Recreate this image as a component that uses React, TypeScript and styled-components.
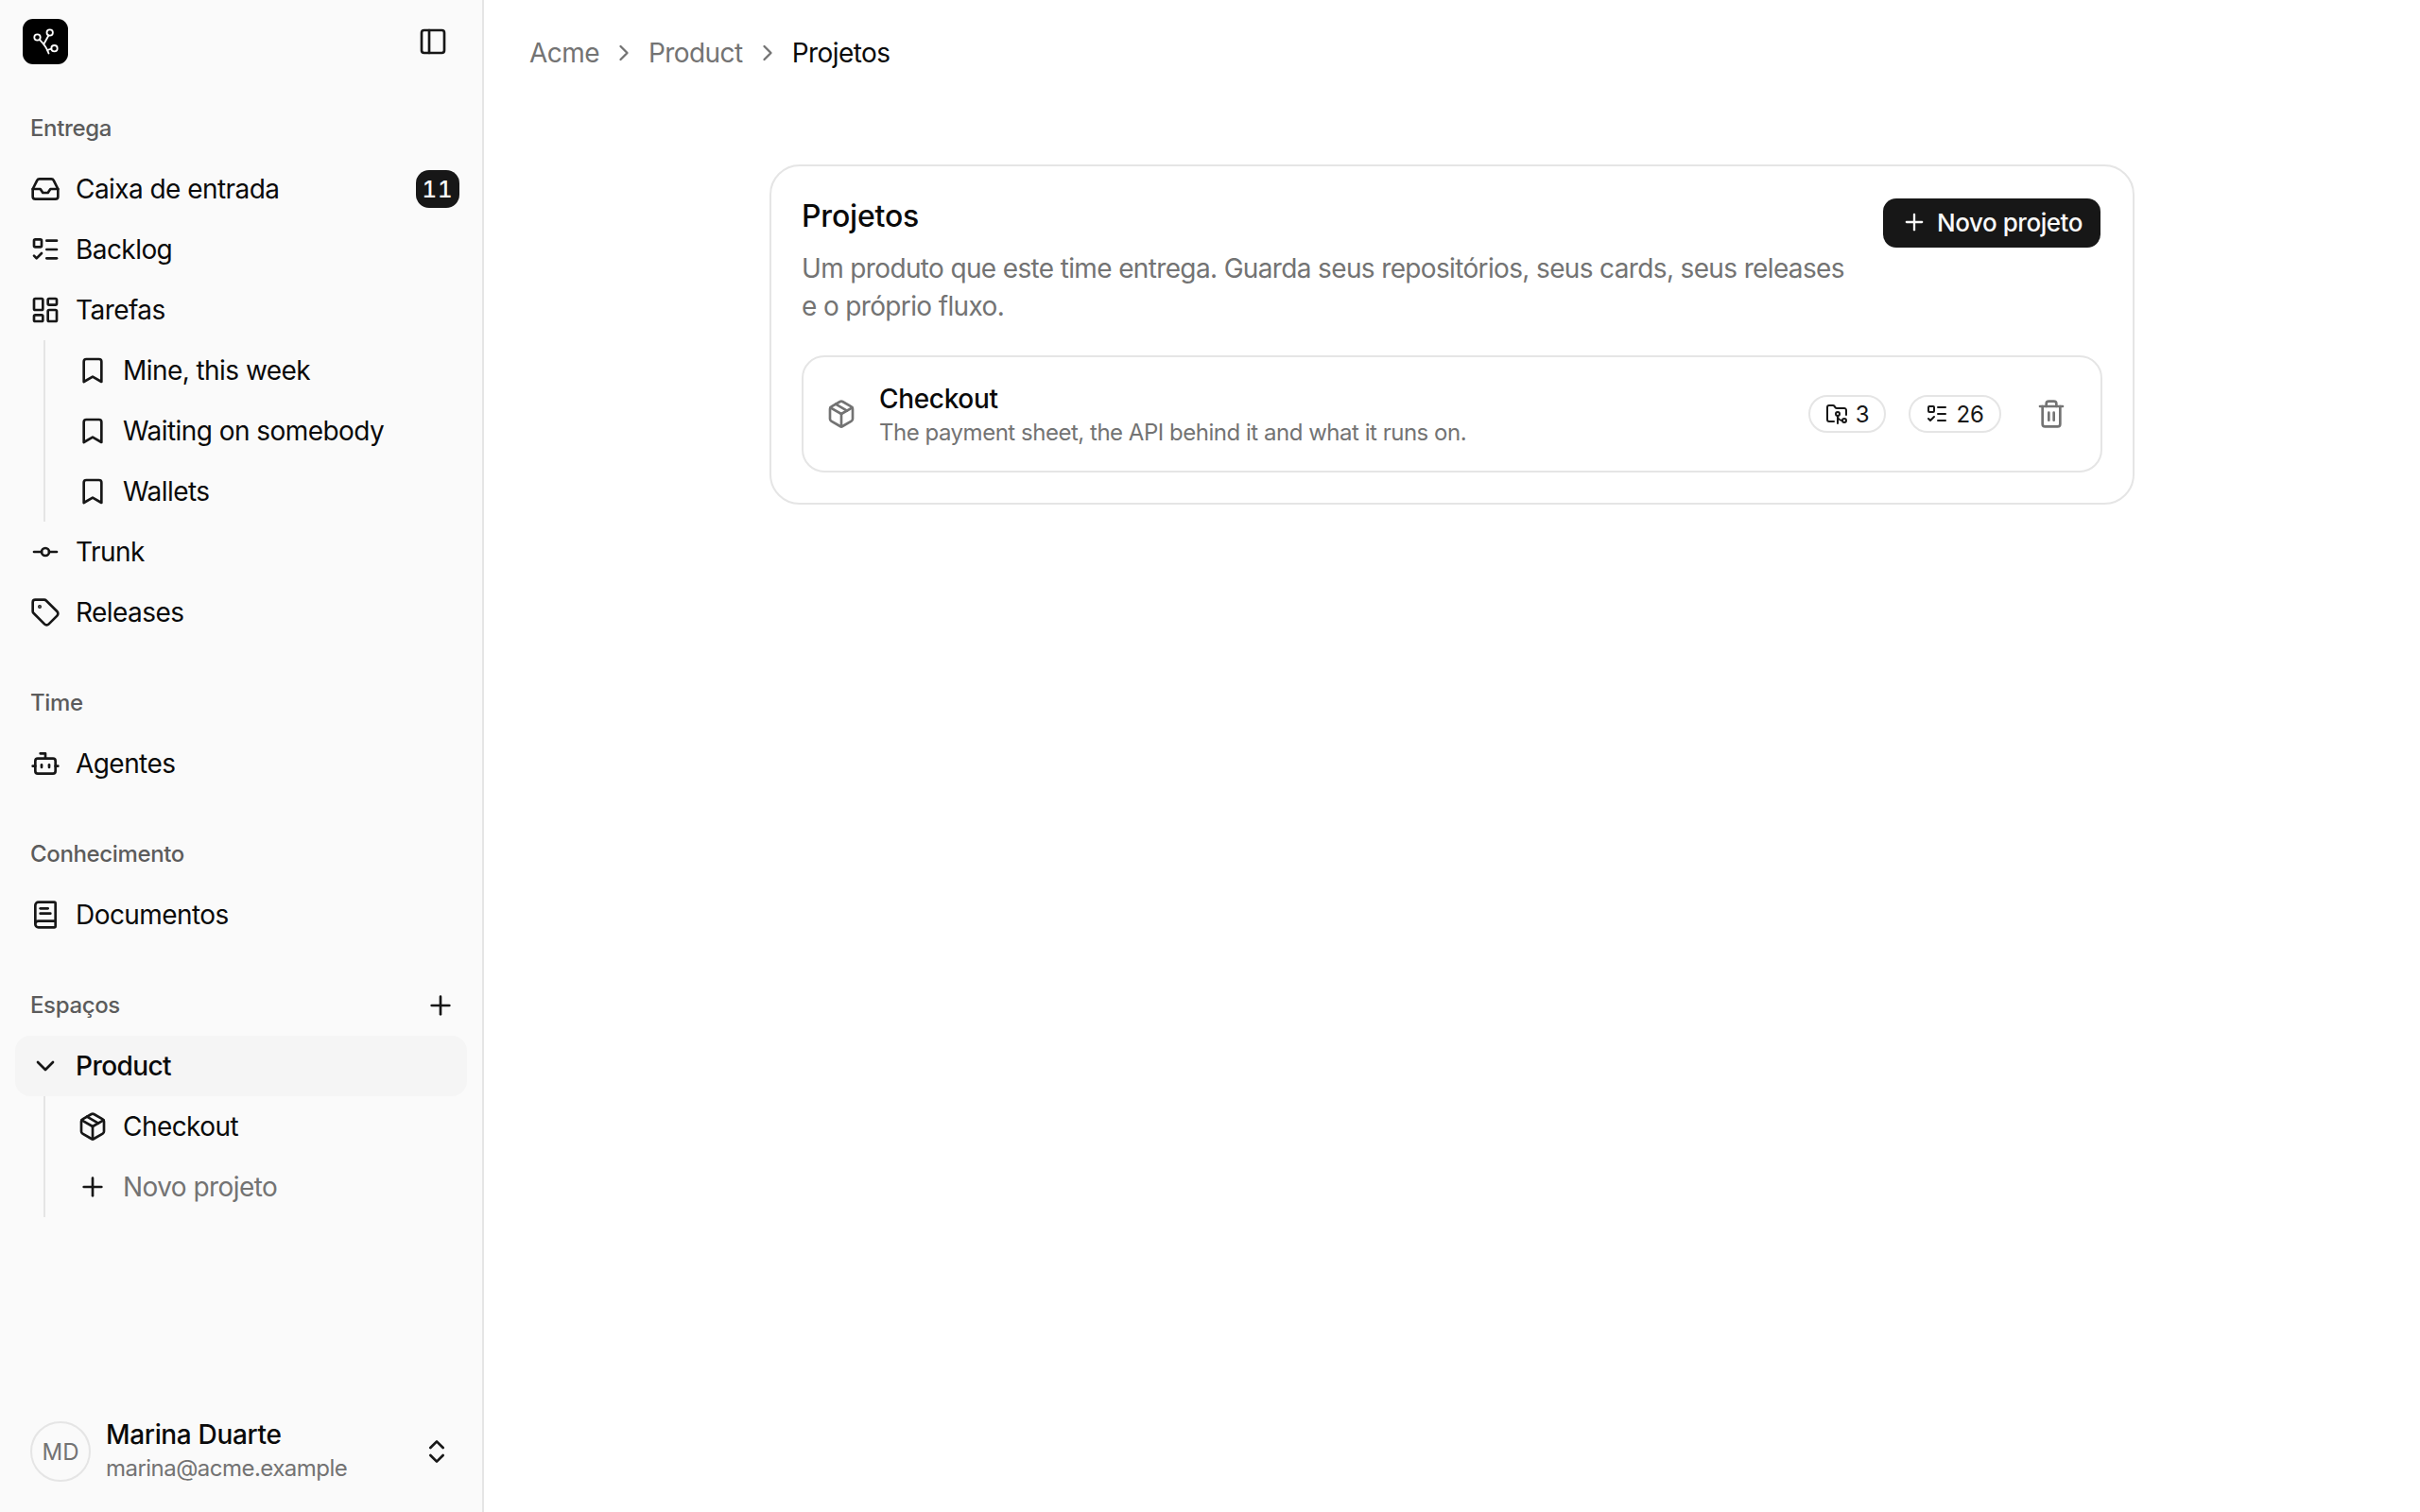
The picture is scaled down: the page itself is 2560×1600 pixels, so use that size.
import React from "react";
import styled, { createGlobalStyle } from "styled-components";
import {
  Inbox,
  ListTodo,
  LayoutDashboard,
  Bookmark,
  GitCommitHorizontal,
  Tag,
  Bot,
  BookText,
  Plus,
  ChevronDown,
  ChevronRight,
  ChevronsUpDown,
  Package,
  PanelLeft,
  FolderGit2,
  Trash2,
} from "lucide-react";

const GlobalStyle = createGlobalStyle`
  html, body, #root {
    margin: 0;
    height: 100%;
  }
  body {
    font-family: Inter, "Liberation Sans", sans-serif;
    color: #0a0a0a;
    background: #ffffff;
  }
  * {
    box-sizing: border-box;
  }
`;

const Shell = styled.div`
  display: flex;
  height: 100vh;
  overflow: hidden;
`;

const Sidebar = styled.aside`
  width: 512px;
  flex: none;
  display: flex;
  flex-direction: column;
  background: #fafafa;
  border-right: 2px solid #e5e5e5;
`;

const SidebarHeader = styled.div`
  height: 104px;
  flex: none;
  display: flex;
  justify-content: space-between;
  align-items: flex-start;
  padding: 20px 36px 0 24px;
`;

const LogoMark = styled.div`
  width: 48px;
  height: 48px;
  border-radius: 11px;
  background: #000000;
  display: flex;
`;

const ToggleButton = styled.div`
  margin-top: 8px;
  display: flex;
  color: #171717;
`;

const Group = styled.section`
  padding: 0 16px;
  margin-bottom: 32px;
`;

const GroupLabel = styled.div`
  height: 64px;
  display: flex;
  align-items: center;
  justify-content: space-between;
  padding: 0 12px 1px 16px;
  font-size: 24px;
  font-weight: 500;
  letter-spacing: -0.015em;
  color: #5c5c5c;
`;

const AddIcon = styled.span`
  display: flex;
  color: #171717;
`;

const Row = styled.div<{ $active?: boolean }>`
  height: 64px;
  display: flex;
  align-items: center;
  gap: 16px;
  padding: 0 8px 0 16px;
  border-radius: 16px;
  font-size: 28px;
  letter-spacing: -0.02em;
  background: ${(p) => (p.$active ? "#f5f5f5" : "transparent")};
  font-weight: ${(p) => (p.$active ? 500 : 400)};
`;

const RowIcon = styled.span`
  width: 32px;
  height: 32px;
  flex: none;
  display: flex;
  align-items: center;
  justify-content: center;
  color: #171717;
`;

const RowLabel = styled.span<{ $muted?: boolean }>`
  flex: 1;
  white-space: nowrap;
  color: ${(p) => (p.$muted ? "#737373" : "#0a0a0a")};
`;

const Badge = styled.span`
  width: 46px;
  height: 40px;
  border-radius: 14px;
  display: flex;
  align-items: center;
  justify-content: center;
  background: #171717;
  color: #fafafa;
  font-size: 24px;
  font-weight: 500;
  letter-spacing: 1px;
  font-feature-settings: "tnum";
`;

const SubList = styled.div`
  margin-left: 30px;
  padding-left: 18px;
  border-left: 2px solid #e5e5e5;
`;

const Footer = styled.div`
  margin-top: auto;
  height: 96px;
  margin-bottom: 16px;
  display: flex;
  align-items: center;
  gap: 16px;
  padding: 0 32px;
`;

const Avatar = styled.div`
  width: 64px;
  height: 64px;
  flex: none;
  border-radius: 50%;
  border: 2px solid #e5e5e5;
  display: flex;
  align-items: center;
  justify-content: center;
  font-size: 24px;
  color: #737373;
`;

const UserInfo = styled.div`
  flex: 1;
  display: flex;
  flex-direction: column;
`;

const UserName = styled.div`
  font-size: 28px;
  line-height: 36px;
  font-weight: 500;
  letter-spacing: -0.012em;
  color: #0a0a0a;
`;

const UserMail = styled.div`
  font-size: 24px;
  line-height: 36px;
  letter-spacing: -0.022em;
  color: #737373;
`;

const Main = styled.main`
  flex: 1;
  display: flex;
  flex-direction: column;
`;

const Breadcrumb = styled.nav`
  height: 112px;
  flex: none;
  display: flex;
  align-items: center;
  gap: 12px;
  padding-left: 48px;
  font-size: 28px;
  letter-spacing: -0.02em;
  color: #737373;
`;

const Crumb = styled.span<{ $current?: boolean }>`
  color: ${(p) => (p.$current ? "#0a0a0a" : "#737373")};
`;

const Content = styled.div`
  flex: 1;
  padding-top: 62px;
`;

const Card = styled.section`
  width: 1444px;
  margin: 0 auto;
  padding: 32px;
  background: #ffffff;
  border: 2px solid #e5e5e5;
  border-radius: 32px;
`;

const CardHeader = styled.div`
  display: flex;
  justify-content: space-between;
  align-items: flex-start;
  gap: 24px;
  margin-bottom: 32px;
`;

const CardHeading = styled.div`
  flex: 1;
  display: flex;
  flex-direction: column;
  gap: 14px;
`;

const CardTitle = styled.h2`
  margin: 0;
  font-size: 32px;
  line-height: 42px;
  font-weight: 500;
  letter-spacing: -0.006em;
  color: #0a0a0a;
`;

const CardText = styled.p`
  margin: 0;
  font-size: 28px;
  line-height: 40px;
  letter-spacing: -0.023em;
  color: #737373;
`;

const PrimaryButton = styled.button`
  height: 52px;
  width: 230px;
  flex: none;
  margin: 2px 2px 0 0;
  padding: 0 0 2px;
  border: 0;
  border-radius: 14px;
  background: #171717;
  color: #fafafa;
  display: flex;
  align-items: center;
  justify-content: center;
  gap: 10px;
  font-family: inherit;
  font-size: 26px;
  font-weight: 500;
  letter-spacing: -0.018em;
`;

const ProjectRow = styled.div`
  height: 124px;
  display: flex;
  align-items: center;
  padding: 0 23px 0 24px;
  border: 2px solid #e5e5e5;
  border-radius: 24px;
`;

const ProjectIcon = styled.span`
  display: flex;
  flex: none;
  margin-right: 24px;
  color: #737373;
`;

const ProjectInfo = styled.div`
  flex: 1;
  display: flex;
  flex-direction: column;
`;

const ProjectName = styled.div`
  font-size: 28px;
  line-height: 40px;
  font-weight: 500;
  letter-spacing: -0.012em;
  color: #0a0a0a;
`;

const ProjectText = styled.div`
  font-size: 24px;
  line-height: 32px;
  letter-spacing: -0.02em;
  color: #737373;
`;

const Pills = styled.div`
  display: flex;
  align-items: center;
  gap: 24px;
`;

const Pill = styled.span`
  height: 40px;
  display: flex;
  align-items: center;
  gap: 8px;
  padding: 0 16px;
  border: 2px solid #e5e5e5;
  border-radius: 999px;
  font-size: 24px;
  color: #171717;
`;

const DeleteButton = styled.span`
  width: 58px;
  height: 40px;
  display: flex;
  align-items: center;
  justify-content: center;
  color: #737373;
`;

const Logo = () => (
  <svg width="48" height="48" viewBox="0 0 48 48" fill="none" stroke="#fff" strokeWidth="1.8" strokeLinecap="round">
    <circle cx="15.5" cy="19.5" r="3.2" />
    <circle cx="28.7" cy="14.5" r="3.2" />
    <circle cx="33.5" cy="31.2" r="3.2" />
    <path d="M17.8 21.8 C21.5 25.5 25.5 30 27.5 36.5" />
    <path d="M27.4 17.5 L22.6 26.2" />
    <path d="M30.4 31.6 C28.4 32 26.8 32.4 26.2 33.4" />
  </svg>
);

export default function App() {
  return (
    <>
      <GlobalStyle />
      <Shell>
        <Sidebar>
          <SidebarHeader>
            <LogoMark>
              <Logo />
            </LogoMark>
            <ToggleButton>
              <PanelLeft size={32} />
            </ToggleButton>
          </SidebarHeader>

          <Group>
            <GroupLabel>Entrega</GroupLabel>
            <Row>
              <RowIcon><Inbox size={32} /></RowIcon>
              <RowLabel>Caixa de entrada</RowLabel>
              <Badge>11</Badge>
            </Row>
            <Row>
              <RowIcon><ListTodo size={32} /></RowIcon>
              <RowLabel>Backlog</RowLabel>
            </Row>
            <Row>
              <RowIcon><LayoutDashboard size={32} /></RowIcon>
              <RowLabel>Tarefas</RowLabel>
            </Row>
            <SubList>
              <Row>
                <RowIcon><Bookmark size={32} /></RowIcon>
                <RowLabel>Mine, this week</RowLabel>
              </Row>
              <Row>
                <RowIcon><Bookmark size={32} /></RowIcon>
                <RowLabel>Waiting on somebody</RowLabel>
              </Row>
              <Row>
                <RowIcon><Bookmark size={32} /></RowIcon>
                <RowLabel>Wallets</RowLabel>
              </Row>
            </SubList>
            <Row>
              <RowIcon><GitCommitHorizontal size={32} /></RowIcon>
              <RowLabel>Trunk</RowLabel>
            </Row>
            <Row>
              <RowIcon><Tag size={32} /></RowIcon>
              <RowLabel>Releases</RowLabel>
            </Row>
          </Group>

          <Group>
            <GroupLabel>Time</GroupLabel>
            <Row>
              <RowIcon><Bot size={32} /></RowIcon>
              <RowLabel>Agentes</RowLabel>
            </Row>
          </Group>

          <Group>
            <GroupLabel>Conhecimento</GroupLabel>
            <Row>
              <RowIcon><BookText size={32} /></RowIcon>
              <RowLabel>Documentos</RowLabel>
            </Row>
          </Group>

          <Group>
            <GroupLabel>
              Espaços
              <AddIcon><Plus size={32} /></AddIcon>
            </GroupLabel>
            <Row $active>
              <RowIcon><ChevronDown size={32} /></RowIcon>
              <RowLabel>Product</RowLabel>
            </Row>
            <SubList>
              <Row>
                <RowIcon><Package size={32} /></RowIcon>
                <RowLabel>Checkout</RowLabel>
              </Row>
              <Row>
                <RowIcon><Plus size={32} /></RowIcon>
                <RowLabel $muted>Novo projeto</RowLabel>
              </Row>
            </SubList>
          </Group>

          <Footer>
            <Avatar>MD</Avatar>
            <UserInfo>
              <UserName>Marina Duarte</UserName>
              <UserMail>marina@acme.example</UserMail>
            </UserInfo>
            <ChevronsUpDown size={32} color="#171717" />
          </Footer>
        </Sidebar>

        <Main>
          <Breadcrumb>
            <Crumb>Acme</Crumb>
            <ChevronRight size={28} />
            <Crumb>Product</Crumb>
            <ChevronRight size={28} />
            <Crumb $current>Projetos</Crumb>
          </Breadcrumb>
          <Content>
            <Card>
              <CardHeader>
                <CardHeading>
                  <CardTitle>Projetos</CardTitle>
                  <CardText>
                    Um produto que este time entrega. Guarda seus repositórios, seus cards, seus releases e o próprio fluxo.
                  </CardText>
                </CardHeading>
                <PrimaryButton>
                  <Plus size={28} />
                  Novo projeto
                </PrimaryButton>
              </CardHeader>
              <ProjectRow>
                <ProjectIcon><Package size={32} /></ProjectIcon>
                <ProjectInfo>
                  <ProjectName>Checkout</ProjectName>
                  <ProjectText>The payment sheet, the API behind it and what it runs on.</ProjectText>
                </ProjectInfo>
                <Pills>
                  <Pill><FolderGit2 size={24} />3</Pill>
                  <Pill><ListTodo size={24} />26</Pill>
                  <DeleteButton><Trash2 size={32} /></DeleteButton>
                </Pills>
              </ProjectRow>
            </Card>
          </Content>
        </Main>
      </Shell>
    </>
  );
}
